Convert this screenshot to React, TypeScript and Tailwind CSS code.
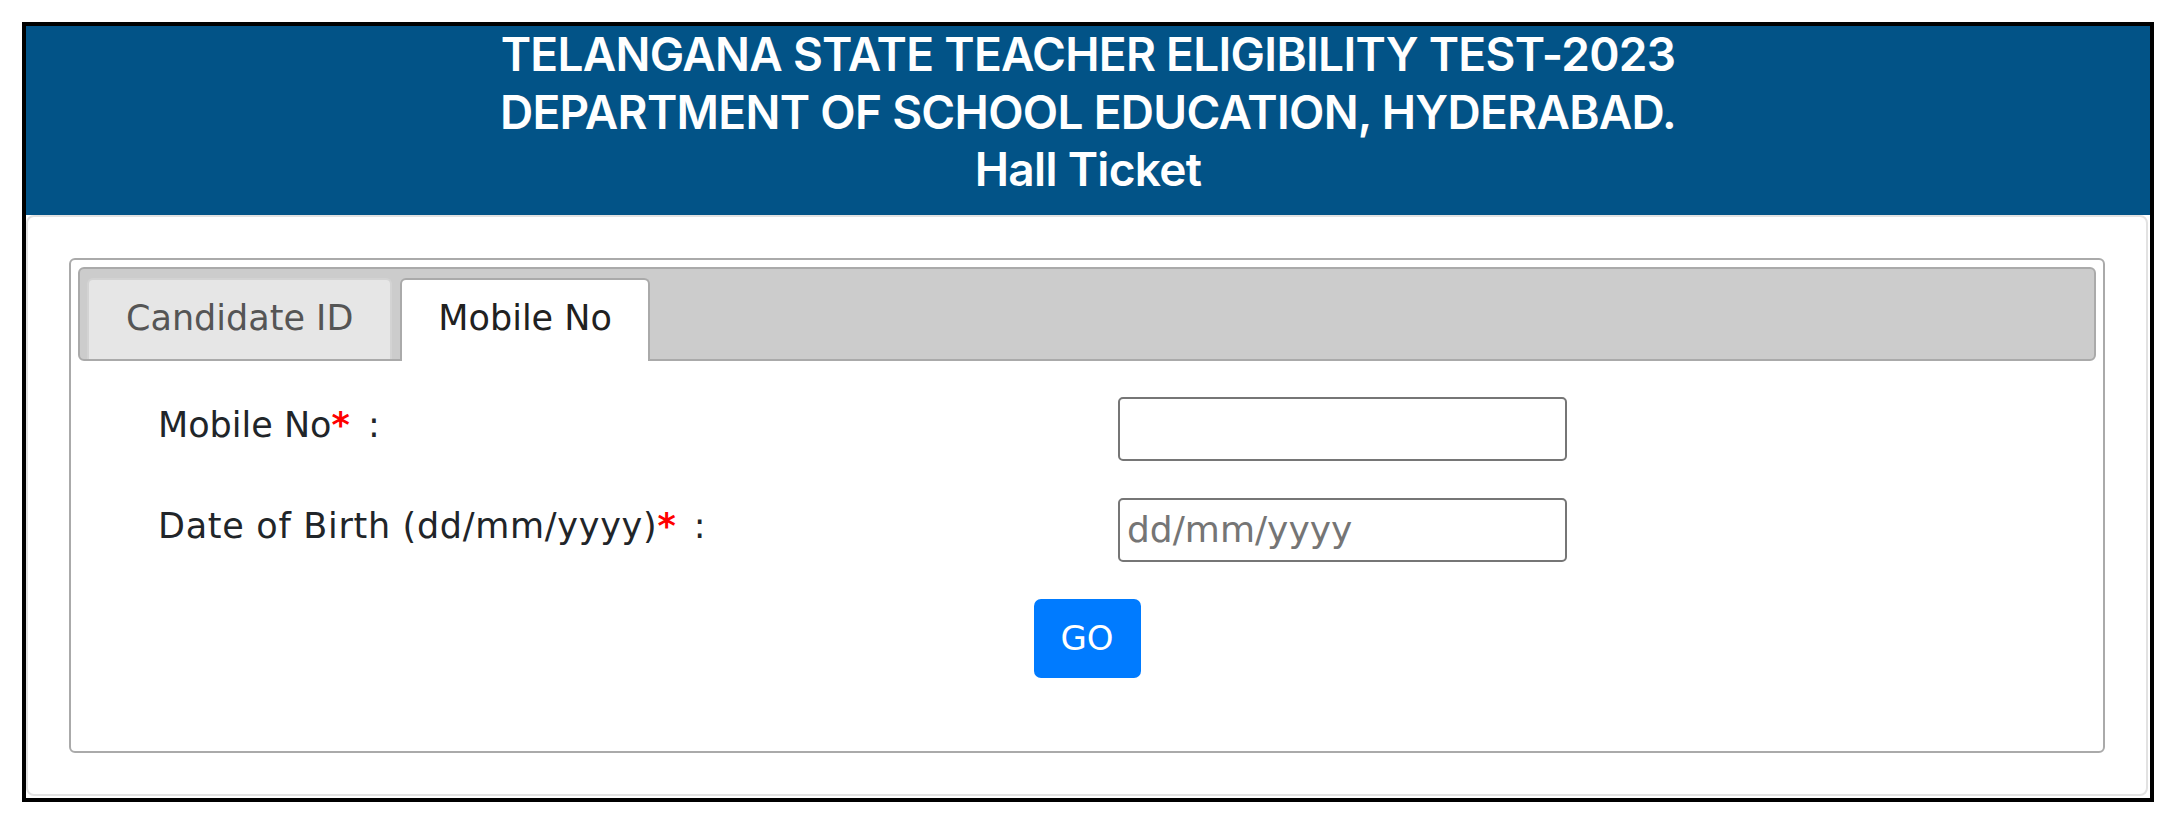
export default function App() {
  return (
    <div className="bg-white min-h-screen pt-[22px] px-[22px] font-['DejaVu_Sans',sans-serif]">
      <div className="border-4 border-black">
        {/* title bar */}
        <div className="bg-[#025387] text-white text-center pb-[16px] font-['Inter',sans-serif] font-semibold text-[46px] leading-[57.6px] tracking-[-0.7px]">
          <div>TELANGANA STATE TEACHER ELIGIBILITY TEST-2023</div>
          <div>DEPARTMENT OF SCHOOL EDUCATION, HYDERABAD.</div>
          <div>Hall Ticket</div>
        </div>

        <div className="bg-white border-2 border-[#e2e2e2] rounded-[8px] mr-[2px] mb-[2px] p-[41px]">
          <div className="border-2 border-[#aaaaaa] rounded-[6px] p-[7px]">
            {/* tabs */}
            <div className="flex items-end gap-[8px] border-2 border-[#aaaaaa] bg-[#cccccc] rounded-[6px] pt-[9px] px-[7px]">
              <button className="h-[81px] px-[37px] pt-[18px] border-2 border-b-0 border-[#d3d3d3] bg-[#e6e6e6] rounded-t-[6px] text-[#555555] text-[35px] leading-[normal] flex items-start">
                Candidate ID
              </button>
              <button className="h-[83px] -mb-[2px] px-[36px] pt-[18px] border-2 border-b-0 border-[#aaaaaa] bg-white rounded-t-[6px] text-[#212121] text-[35px] leading-[normal] flex items-start">
                Mobile No
              </button>
            </div>

            {/* form */}
            <div className="pt-[36px] pb-[66px]">
              <div className="pl-[80px] grid grid-cols-[960px_auto] gap-y-[37px] text-[#212529] text-[35px] leading-[normal]">
                <div className="pt-[8px]">
                  Mobile No<span className="text-[#ff0000] font-bold">*</span> <span className="ml-[7px]">:</span>
                </div>
                <input
                  type="text"
                  className="w-[449px] h-[64px] border-2 border-[#767676] rounded-[5px] px-[7px] text-[36px] outline-none"
                />
                <div className="pt-[8px]">
                  <span className="tracking-[0.7px]">Date of Birth (dd/mm/yyyy)</span>
                  <span className="text-[#ff0000] font-bold">*</span> <span className="ml-[7px]">:</span>
                </div>
                <input
                  type="text"
                  placeholder="dd/mm/yyyy"
                  className="w-[449px] h-[64px] border-2 border-[#767676] rounded-[5px] px-[7px] text-[36px] placeholder:text-[#757575] outline-none"
                />
              </div>
              <div className="flex justify-center mt-[37px]">
                <button className="w-[107px] h-[79px] bg-[#007bff] rounded-[7px] text-white text-[34px] leading-[normal]">
                  GO
                </button>
              </div>
            </div>
          </div>
        </div>
      </div>
    </div>
  );
}
